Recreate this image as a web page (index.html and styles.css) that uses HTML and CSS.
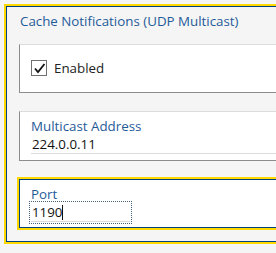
FILE: index.html
```html
<!DOCTYPE html>
<html lang="en">
<head>
    <meta charset="UTF-8">
    <meta name="viewport" content="width=device-width, initial-scale=1.0">
    <link rel="stylesheet" href="styles.css">
</head>
<body>
    <div class="group">
        <div class="group-title">Cache Notifications (UDP Multicast)</div>

        <div class="field field-check">
            <label class="check-option">
                <span class="check-box">
                    <svg width="13" height="13" viewBox="0 0 13 13">
                        <path d="M2 6.5 L5 10 L11.5 2" fill="none" stroke="#111" stroke-width="1.8"/>
                    </svg>
                </span>
                Enabled
            </label>
        </div>

        <div class="field">
            <div class="field-label">Multicast Address</div>
            <div class="field-input">224.0.0.11</div>
        </div>

        <div class="field field-focus">
            <div class="field-label">Port</div>
            <div class="field-input field-input-short">1190<span class="caret"></span></div>
        </div>
    </div>
</body>
</html>
```
FILE: styles.css
```css
body {
    margin: 0;
    height: 100vh;
    overflow: hidden;
    background: #f5f5f5;
    font-family: 'Open Sans', 'Noto Sans', sans-serif;
    font-size: 10pt;
    line-height: 18px;
}

.group {
    margin: 6px 0 0 6px;
    width: 320px;
    border: 1px solid #00407f;
    outline: 2px solid #ffd800;
    padding: 5px 0 13px 12px;
    display: flex;
    flex-direction: column;
    gap: 18px;
}

.group-title {
    color: #1f5b99;
    padding-left: 1px;
    margin-bottom: -4px;
}

.field {
    background: white;
    border: 1px solid #8c8c8c;
    border-top-color: #dcdcdc;
    padding: 5px 0 6px 11px;
}

.field-check {
    height: 36px;
    display: flex;
    align-items: center;
}

.check-option {
    display: flex;
    align-items: center;
    gap: 7px;
    color: #222;
}

.check-box {
    width: 14px;
    height: 14px;
    border: 1px solid #707070;
    background: white;
    display: flex;
    align-items: center;
    justify-content: center;
}

.field-label {
    color: #1f5b99;
}

.field-input {
    color: #111;
    padding-left: 1px;
    border-bottom: 1px solid #dcdcdc;
}

.field-focus {
    border: 1px solid #00407f;
    outline: 2px solid #ffd800;
    padding-bottom: 5px;
}

.field-input-short {
    width: 98px;
    outline: 1px dotted #40607f;
    outline-offset: 1px;
}

.caret {
    display: inline-block;
    width: 1px;
    height: 15px;
    background: #111;
    vertical-align: -3px;
}
```
